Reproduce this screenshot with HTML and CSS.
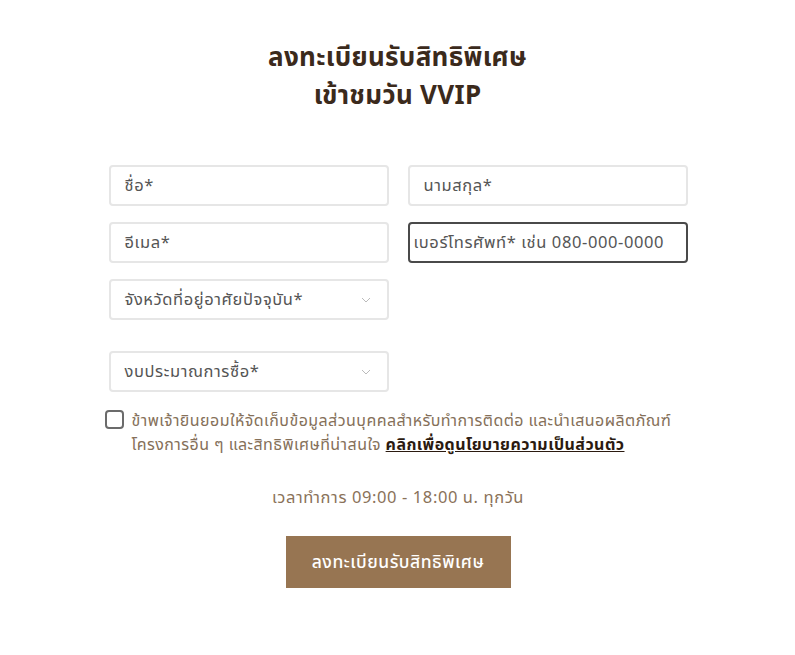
FILE: index.html
```html
<!DOCTYPE html>
<html lang="th">
<head>
<meta charset="utf-8">
<link rel="stylesheet" href="styles.css">
</head>
<body>
<main class="page">
  <h1 class="title">ลงทะเบียนรับสิทธิพิเศษ<br>เข้าชมวัน VVIP</h1>
  <form class="form">
    <div class="grid">
      <div class="field"><span class="ph">ชื่อ*</span></div>
      <div class="field"><span class="ph">นามสกุล*</span></div>
      <div class="field"><span class="ph">อีเมล*</span></div>
      <div class="field focus"><span class="ph">เบอร์โทรศัพท์* เช่น 080-000-0000</span></div>
      <div class="field select"><span class="ph">จังหวัดที่อยู่อาศัยปัจจุบัน*</span>
        <svg class="chev" width="10" height="6" viewBox="0 0 10 6"><path d="M1 1l4 4 4-4" fill="none" stroke="#bbb" stroke-width="1"/></svg>
      </div>
    </div>
    <div class="grid second">
      <div class="field select"><span class="ph">งบประมาณการซื้อ*</span>
        <svg class="chev" width="10" height="6" viewBox="0 0 10 6"><path d="M1 1l4 4 4-4" fill="none" stroke="#bbb" stroke-width="1"/></svg>
      </div>
    </div>
    <div class="consent">
      <span class="box"></span>
      <p class="consent-text">ข้าพเจ้ายินยอมให้จัดเก็บข้อมูลส่วนบุคคลสำหรับทำการติดต่อ และนำเสนอผลิตภัณฑ์<br>โครงการอื่น ๆ และสิทธิพิเศษที่น่าสนใจ <a href="#" class="link">คลิกเพื่อดูนโยบายความเป็นส่วนตัว</a></p>
    </div>
    <p class="hours">เวลาทำการ 09:00 - 18:00 น. ทุกวัน</p>
    <div class="actions"><button type="button" class="submit">ลงทะเบียนรับสิทธิพิเศษ</button></div>
  </form>
</main>
</body>
</html>
```
FILE: styles.css
```css
* { box-sizing: border-box; }
html, body { margin: 0; padding: 0; background: #fff; }
body { font-family: "Noto Sans", "Noto Sans Thai", sans-serif; }
.page { width: 795px; padding-top: 37px; }
.title {
  margin: 0;
  text-align: center;
  font-size: 26px;
  letter-spacing: 0.3px;
  line-height: 38px;
  font-weight: 700;
  color: #3b2a1c;
}
.form { width: 580px; margin: 52px auto 0; padding-left: 1px; }
.grid { display: grid; grid-template-columns: 280px 280px; column-gap: 19px; row-gap: 16px; }
.grid.second { margin-top: 31px; }
.field {
  height: 41px;
  border: 2px solid #e6e6e6;
  border-radius: 4px;
  display: flex;
  align-items: center;
  padding: 0 14px;
  font-size: 16.5px;
  letter-spacing: 0.6px;
  color: #555;
  position: relative;
}
.field.focus { border-color: #4a4a4a; padding-left: 4px; }
.select { justify-content: space-between; }
.chev { margin-right: 2px; }
.consent { display: flex; align-items: flex-start; margin-top: 16px; margin-left: -4px; }
.box {
  flex: none;
  width: 19px; height: 19px;
  border: 2px solid #6b6b6b;
  border-radius: 4px;
  margin-top: 2px;
  margin-right: 8px;
}
.consent-text { margin: 0; font-size: 16px; letter-spacing: 0.45px; line-height: 24px; color: #857059; white-space: nowrap; }
.link { color: #2b1a10; font-weight: 700; text-decoration: underline; }
.hours { margin: 29px 0 0; text-align: center; font-size: 16.5px; letter-spacing: 0.6px; color: #8a7259; }
.actions { display: flex; justify-content: center; margin-top: 26px; }
.submit {
  width: 225px; height: 52px;
  background: #977552;
  border: 0;
  color: #fff;
  font-family: inherit;
  font-size: 17.5px;
  letter-spacing: 0.5px;
  font-weight: 500;
}
```
